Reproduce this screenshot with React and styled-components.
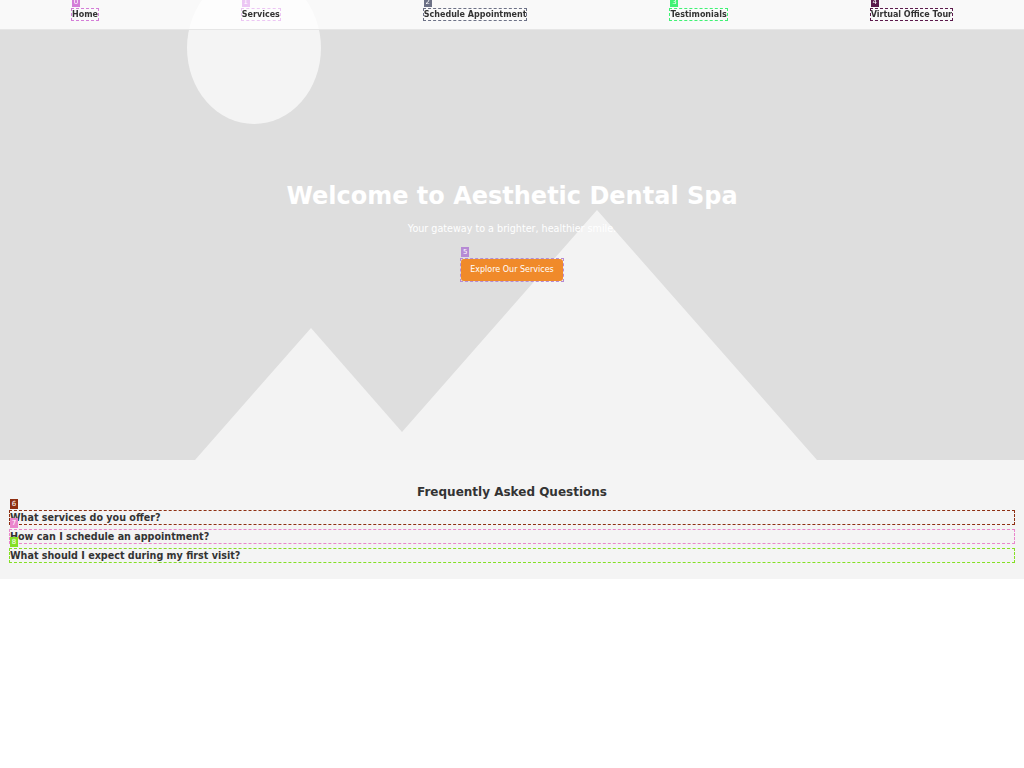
import React from 'react';
import styled, { createGlobalStyle } from 'styled-components';

const GlobalStyle = createGlobalStyle`
  body {
    margin: 0;
    background: #fff;
    color: #333;
    font-family: "DejaVu Sans", Verdana, sans-serif;
  }
`;

const Nav = styled.nav`
  position: fixed;
  top: 0;
  left: 0;
  right: 0;
  height: 28px;
  display: flex;
  justify-content: space-around;
  align-items: center;
  padding-bottom: 1px;
  background: rgba(255, 255, 255, 0.8);
  border-bottom: 1px solid #e6e6e6;
  z-index: 10;
`;

const Marked = styled.span`
  position: relative;
  display: block;
  outline: 1px dashed ${(p) => p.$c};
`;

const Tag = styled.span`
  position: absolute;
  left: 0;
  bottom: calc(100% + 2px);
  min-width: 8px;
  height: 10px;
  background: ${(p) => p.$c};
  color: #fff;
  font-size: 7px;
  font-weight: normal;
  line-height: 10px;
  text-align: center;
`;

const NavLink = styled.a`
  display: block;
  color: #333;
  font-size: 8px;
  font-weight: bold;
  line-height: 11px;
  text-decoration: none;
`;

const Hero = styled.header`
  position: relative;
  height: 460px;
  overflow: hidden;
  display: flex;
  flex-direction: column;
  align-items: center;
  justify-content: center;
  background: #dedede;
`;

const Backdrop = styled.svg`
  position: absolute;
  inset: 0;
  width: 100%;
  height: 100%;
`;

const HeroContent = styled.div`
  position: relative;
  display: flex;
  flex-direction: column;
  align-items: center;
  padding-top: 2px;
`;

const Title = styled.h1`
  margin: 0;
  color: #fff;
  font-size: 24px;
  line-height: 28px;
  font-weight: bold;
`;

const Subtitle = styled.p`
  margin: 13px 0 0;
  color: #fff;
  font-size: 9.6px;
  line-height: 12px;
`;

const CtaWrap = styled.div`
  margin-top: 24px;
`;

const Button = styled.button`
  display: block;
  border: none;
  border-radius: 3px;
  padding: 6px 9px;
  background: #f08a2a;
  color: #fff;
  font-family: inherit;
  font-size: 8px;
  line-height: 10px;
  cursor: pointer;
`;

const Faq = styled.section`
  background: #f4f4f4;
  padding: 25px 10px 17px;
`;

const FaqTitle = styled.h2`
  margin: 0 0 12px;
  text-align: center;
  font-size: 12px;
  line-height: 14px;
  font-weight: bold;
  color: #333;
`;

const Questions = styled.div`
  display: flex;
  flex-direction: column;
  gap: 6px;
`;

const Question = styled.h3`
  margin: 0;
  font-size: 9.6px;
  line-height: 13px;
  font-weight: bold;
  color: #333;
`;

const links = [
  { label: 'Home', c: '#d47ed8' },
  { label: 'Services', c: '#ecc6f4' },
  { label: 'Schedule Appointment', c: '#6c7186' },
  { label: 'Testimonials', c: '#3ff274' },
  { label: 'Virtual Office Tour', c: '#5b1a4c' },
];

const questions = [
  { text: 'What services do you offer?', c: '#8e2f12' },
  { text: 'How can I schedule an appointment?', c: '#ea86cc' },
  { text: 'What should I expect during my first visit?', c: '#84e024' },
];

const App = () => {
  return (
    <>
      <GlobalStyle />
      <Nav>
        {links.map((l, i) => (
          <Marked key={l.label} $c={l.c}>
            <Tag $c={l.c}>{i}</Tag>
            <NavLink href="#">{l.label}</NavLink>
          </Marked>
        ))}
      </Nav>
      <Hero>
        <Backdrop viewBox="0 0 1024 460" preserveAspectRatio="none">
          <rect width="1024" height="460" fill="#dedede" />
          <ellipse cx="254" cy="48" rx="67" ry="76" fill="#f4f4f4" />
          <polygon
            points="195,460 311,328 402,432 597,210 817,460"
            fill="#f3f3f3"
          />
        </Backdrop>
        <HeroContent>
          <Title>Welcome to Aesthetic Dental Spa</Title>
          <Subtitle>Your gateway to a brighter, healthier smile.</Subtitle>
          <CtaWrap>
            <Marked $c="#b68ad4">
              <Tag $c="#b68ad4">5</Tag>
              <Button>Explore Our Services</Button>
            </Marked>
          </CtaWrap>
        </HeroContent>
      </Hero>
      <Faq>
        <FaqTitle>Frequently Asked Questions</FaqTitle>
        <Questions>
          {questions.map((q, i) => (
            <Marked key={q.text} $c={q.c}>
              <Tag $c={q.c}>{i + 6}</Tag>
              <Question>{q.text}</Question>
            </Marked>
          ))}
        </Questions>
      </Faq>
    </>
  );
};

export default App;
